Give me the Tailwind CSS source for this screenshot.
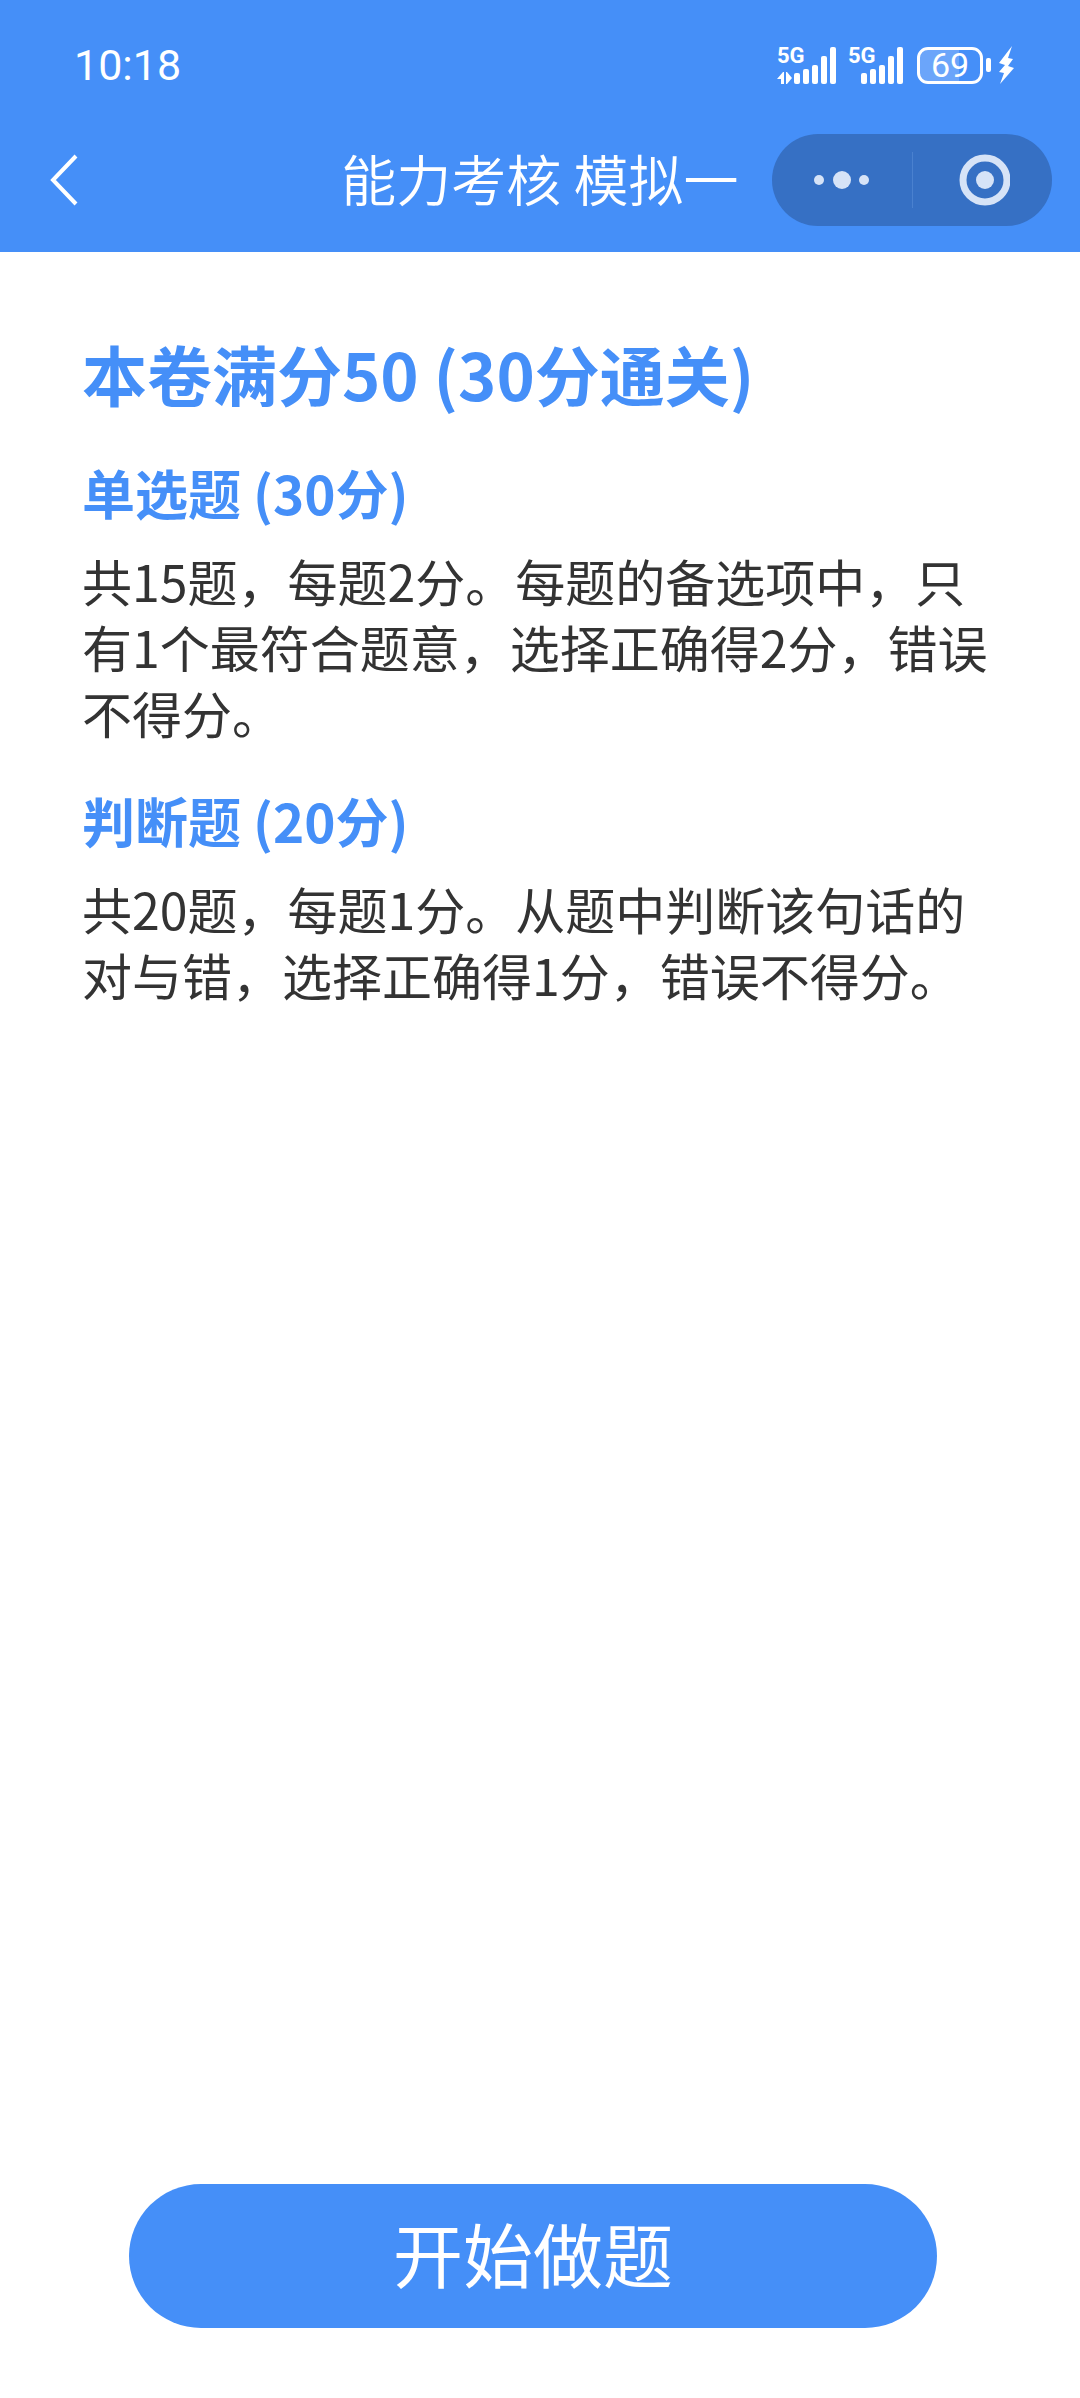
<!DOCTYPE html>
<html lang="zh-CN">
<head>
<meta charset="utf-8">
<meta name="viewport" content="width=device-width, initial-scale=1">
<title>能力考核 模拟一</title>
<script src="https://cdn.jsdelivr.net/npm/@tailwindcss/browser@4"></script>
</head>
<body class="flex min-h-screen flex-col bg-white font-['Noto_Sans_CJK_SC',sans-serif] text-[#333333]">
  <header class="bg-[#458ff8] text-white">
    <!-- Status bar -->
    <div class="flex h-[108px] items-center justify-between pt-[22px] pr-[66px] pl-[74px]">
      <time class="font-[Roboto,sans-serif] text-[43px] leading-[48px]">10:18</time>
      <div class="flex items-center">
        <div class="relative h-[38px] w-[59px]">
          <span class="absolute top-0 left-0 font-[Roboto,sans-serif] text-[22px] leading-[20px] font-bold">5G</span>
          <svg class="h-[38px] w-[59px]" viewBox="0 0 59 38" fill="currentColor" aria-hidden="true">
            <path d="M0 33l6-7h1v12H4v-5zM9 26h1v0l5 6-5 6H9z"/>
            <rect x="17" y="27" width="6" height="11" rx="2"/><rect x="26" y="23" width="6" height="15" rx="2"/><rect x="35" y="19" width="6" height="19" rx="2"/><rect x="44" y="10" width="6" height="28" rx="2"/><rect x="53" y="1" width="6" height="37" rx="2"/>
          </svg>
        </div>
        <div class="relative ml-[12px] h-[38px] w-[55px]">
          <span class="absolute top-0 left-0 font-[Roboto,sans-serif] text-[22px] leading-[20px] font-bold">5G</span>
          <svg class="h-[38px] w-[55px]" viewBox="0 0 55 38" fill="currentColor" aria-hidden="true">
            <rect x="13" y="27" width="6" height="11" rx="2"/><rect x="22" y="23" width="6" height="15" rx="2"/><rect x="31" y="19" width="6" height="19" rx="2"/><rect x="40" y="10" width="6" height="28" rx="2"/><rect x="49" y="1" width="6" height="37" rx="2"/>
          </svg>
        </div>
        <div class="ml-[14px] flex h-[37px] w-[66px] items-center justify-center rounded-[11px] border-[3px] border-white bg-linear-to-r from-[#6ba5fa] from-65% to-[#458ff8] to-65% font-[Roboto,sans-serif] text-[34px] leading-[34px]">69</div>
        <svg class="ml-[3px] h-[38px] w-[28px]" viewBox="0 0 28 38" fill="currentColor" aria-hidden="true">
          <rect x="0" y="12" width="5" height="14" rx="2"/>
          <path d="M26 0L13 17l6 2-6 7 5 1-4 11 14-16-6-2 5-7-5-1z"/>
        </svg>
      </div>
    </div>
    <!-- Navigation bar -->
    <div class="grid h-36 grid-cols-[280px_1fr_280px] items-center pr-[28px] pl-[28px]">
      <button type="button" aria-label="返回" class="justify-self-start px-[20px] py-[20px]">
        <svg class="h-[54px] w-[32px]" viewBox="0 0 32 54" fill="none" stroke="currentColor" stroke-width="4" aria-hidden="true"><path d="M28 3L5 27l23 24"/></svg>
      </button>
      <h1 class="pb-[6px] text-center text-[55px] leading-[80px] font-[350] whitespace-nowrap">能力考核 模拟一</h1>
      <div class="flex h-[92px] items-center rounded-full bg-[#3670c4] text-[#d6e3f7]">
        <button type="button" aria-label="更多" class="flex h-full w-1/2 items-center justify-center">
          <svg class="h-[20px] w-[56px]" viewBox="0 0 56 20" fill="currentColor" aria-hidden="true"><circle cx="5" cy="10" r="5"/><circle cx="28" cy="10" r="9"/><circle cx="50" cy="10" r="5"/></svg>
        </button>
        <span class="h-[56px] w-px bg-[#4a81cf]"></span>
        <button type="button" aria-label="关闭" class="flex h-full flex-1 items-center justify-center">
          <svg class="h-[54px] w-[54px]" viewBox="0 0 54 54" aria-hidden="true"><circle cx="29" cy="27" r="22" fill="none" stroke="currentColor" stroke-width="7"/><circle cx="29" cy="27" r="9" fill="currentColor"/></svg>
        </button>
      </div>
    </div>
  </header>

  <main class="flex-1 px-[82px] pt-[81px]">
    <h2 class="text-[65px] leading-[80px] font-bold text-[#458ff8]">本卷满分50 (30分通关)</h2>
    <section class="mt-[46px]">
      <h3 class="text-[53px] leading-[66px] font-bold text-[#458ff8]">单选题 (30分)</h3>
      <p class="mt-[22px] text-[50px] leading-[66px]">共15题，每题2分。每题的备选项中，只有1个最符合题意，选择正确得2分，错误不得分。</p>
    </section>
    <section class="mt-[42px]">
      <h3 class="text-[53px] leading-[66px] font-bold text-[#458ff8]">判断题 (20分)</h3>
      <p class="mt-[22px] text-[50px] leading-[66px]">共20题，每题1分。从题中判断该句话的对与错，选择正确得1分，错误不得分。</p>
    </section>
  </main>

  <footer class="pr-[143px] pb-[70px] pl-[129px]">
    <button type="button" class="h-36 w-full rounded-full bg-[#458ff8] pb-[6px] text-[70px] leading-[80px] text-white">开始做题</button>
  </footer>
</body>
</html>
